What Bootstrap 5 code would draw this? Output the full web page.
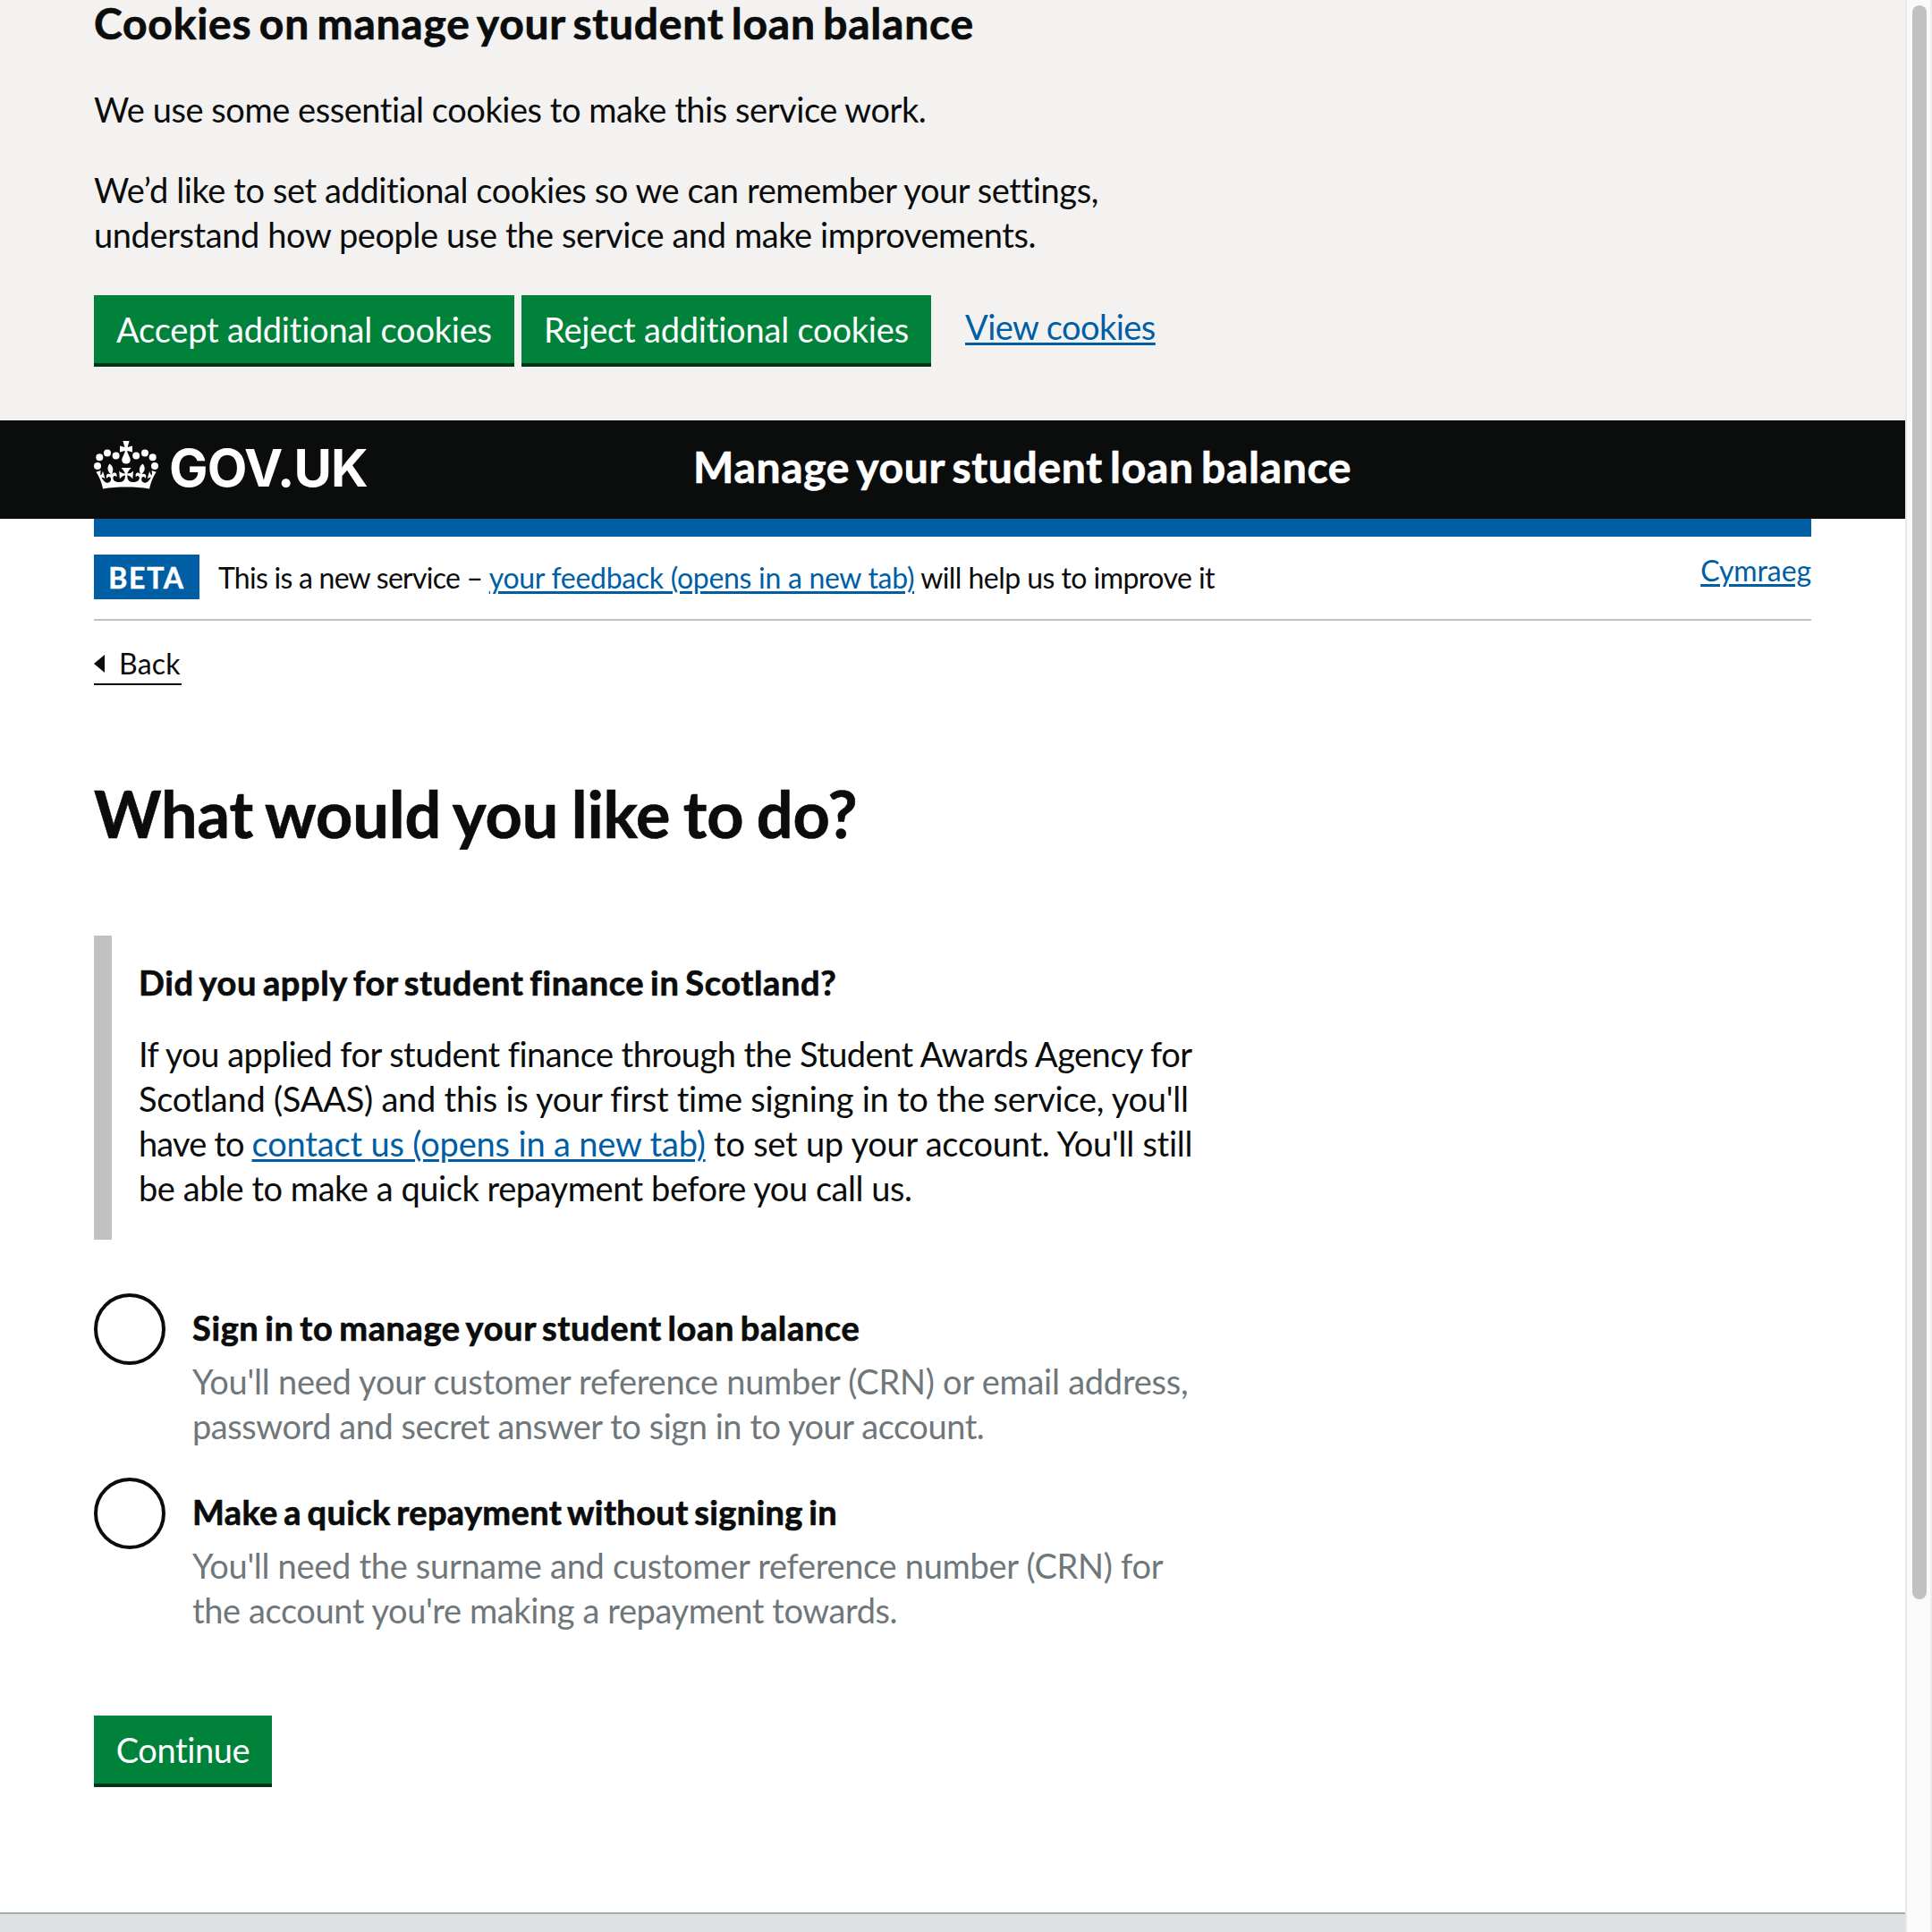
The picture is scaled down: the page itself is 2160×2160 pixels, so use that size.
<!DOCTYPE html>
<html lang="en">
<head>
<meta charset="utf-8">
<title>What would you like to do? - Manage your student loan balance</title>
<link href="https://cdn.jsdelivr.net/npm/bootstrap@5.3.0/dist/css/bootstrap.min.css" rel="stylesheet">
<style>
:root{--ink:#0b0c0c;--brand:#005ea5;--green:#00823b}
html,body{height:100%}
body{font-family:Lato,"Noto Sans",sans-serif;font-size:38px;line-height:50px;color:var(--ink);background:#fff;font-variant-ligatures:none;overflow:hidden}
.page{width:2130px;height:2160px;overflow:hidden}
.wrap{width:1920px;margin-left:105px}
.ln{display:block;white-space:nowrap}
.brand-link{color:var(--brand);text-decoration:underline;text-decoration-thickness:3px;text-underline-offset:3px}
.cookie-banner{height:470px;background:#f3f2f1}
.cookie-title{font-size:48px;line-height:50px;font-weight:700;letter-spacing:.77px;word-spacing:-4px;margin:0 0 46px;padding-top:1px}
.cookie-text{padding-top:40px;margin-bottom:43px}
.cookie-title,.svc-name,.page-title,.b{-webkit-text-stroke:.7px currentColor}
.gov-btn{background:var(--green);color:#fff;border:0;border-bottom:4px solid #003618;border-radius:0;height:80px;padding:13px 0;font-size:38px;line-height:50px;text-align:center;letter-spacing:-.2px}
.w-accept{width:470px}.w-reject{width:458px}.w-continue{width:199px;letter-spacing:-.4px;margin-top:93px}
.view-link{margin:10px 0 0 38px;letter-spacing:-.55px}
.masthead{height:110px;background:var(--ink);color:#fff}
.crown{width:73px;height:54px;fill:currentColor;margin-top:-10px}
.wordmark{font:700 58px/60px Inter,sans-serif;letter-spacing:-.9px;margin-left:11px;padding-bottom:4px;width:581px}
.svc-name{font-size:48px;line-height:60px;font-weight:700;letter-spacing:.68px;word-spacing:-4px;padding-bottom:7px;margin-left:5px}
.bluebar{height:20px;background:var(--brand)}
.phase{height:94px;padding-top:20px;border-bottom:2px solid #bfc1c3;font-size:32px;line-height:52px}
.phase-tag{width:118px;height:50px;background:var(--brand);color:#fff;font-weight:700;letter-spacing:1.7px;text-align:center;margin-right:21px;-webkit-text-stroke:.5px currentColor}
.welsh{margin-top:-8px;letter-spacing:-.1px}
.back{color:var(--ink);font-size:32px;line-height:40px;margin-top:26px;padding-bottom:1px;border-bottom:2px solid var(--ink);height:46px;width:98px;letter-spacing:.2px}
.back svg{width:12px;height:20px;margin:1px 16px 0 0;flex:none}
.page-title{font-size:72px;line-height:80px;font-weight:700;letter-spacing:-.12px;word-spacing:-3px;margin:103px 0 97px}
.inset{height:340px;border-left:20px solid #bfc1c3;padding:27px 0 0 30px}
.inset-title{font-size:38px;line-height:50px;margin-bottom:30px}
.tasks{padding-top:60px}
.ring{width:80px;height:80px;border:4px solid var(--ink);border-radius:50%;background:#fff;margin-right:30px;flex:none;appearance:none}
.choice{margin-bottom:33px}
.choice label{padding-top:13px}
.hint{color:#6f777b;padding-top:10px}
.b{font-weight:700;word-spacing:-3px}
.b.s0{letter-spacing:.61px}.b.s1{letter-spacing:.36px}
.s2{letter-spacing:-.25px}.s3{letter-spacing:-.3px}.s4{letter-spacing:-.4px}.s5{letter-spacing:-.45px}.s6{letter-spacing:-.55px}.s7{letter-spacing:-.75px}
.have{letter-spacing:-.85px}
.contact{letter-spacing:-.17px}
.foot{margin-top:140px;height:22px;background:#dee0e2;border-top:2px solid #a1acb2}
.track{width:30px;height:2160px;background:#fafafa;border-left:2px solid #e8e8e8;border-right:2px solid #ededed;padding:6px 0 0 6px}
.thumb{width:16px;height:1782px;border-radius:8px;background:#c1c1c1}
</style>
<script src="https://cdn.jsdelivr.net/npm/bootstrap@5.3.0/dist/js/bootstrap.bundle.min.js"></script>
</head>
<body class="d-flex">
<div class="page">
  <section class="cookie-banner">
    <div class="wrap">
      <h2 class="cookie-title ln">Cookies on manage your student loan balance</h2>
      <p class="ln s5 mb-0">We use some essential cookies to make this service work.</p>
      <p class="cookie-text"><span class="ln s4">We’d like to set additional cookies so we can remember your settings,</span><span class="ln s4">understand how people use the service and make improvements.</span></p>
      <div class="d-flex align-items-start">
        <button class="btn gov-btn w-accept me-2">Accept additional cookies</button>
        <button class="btn gov-btn w-reject">Reject additional cookies</button>
        <a href="#" class="brand-link view-link">View cookies</a>
      </div>
    </div>
  </section>
  <header class="masthead">
    <div class="wrap h-100 d-flex align-items-center">
      <svg class="crown" viewBox="0 0 73 54" aria-hidden="true">
        <circle cx="4" cy="28" r="4"/><circle cx="6.3" cy="18.3" r="4"/><circle cx="15" cy="13.5" r="4"/><circle cx="24.6" cy="16.5" r="4"/>
        <circle cx="47.2" cy="16.5" r="4"/><circle cx="57" cy="13.5" r="4"/><circle cx="65.7" cy="18.3" r="4"/><circle cx="68" cy="28" r="4"/>
        <path d="M32.4 0h7.2l-2 6.9 5.4-1.5v7l-5.400-1.500-.4 1.200 3.100 6.800c1.500 3.800-.8 6.600-4.300 6.600s-5.800-2.800-4.300-6.600l3.100-6.800-.4-1.200-5.400 1.500v-7l5.400 1.500z"/>
        <path transform="translate(2.400 -10.200) scale(1.060)" d="M37,37.900s-3.400,3.800-4.100,6.100c2.200,0,4.200-.5,6.400-2.800l-.7,8.500c-2-2.800-4.400-4.100-5.700-3.800.1,3.100.5,6.700,5.800,7.200,3.700.3,6.700-1.500,7-3.800.4-2.600-2-4.300-3.700-1.600-1.400-4.500,2.400-6.100,4.900-3.200-1.900-4.500-1.800-7.700,2.400-10.900,3,4,2.600,7.300-1.200,11.100,2.400-1.300,6.200,0,4,4.600-1.200-2.800-3.700-2.200-4.200.2-.3,1.700.7,3.700,3,4.200,1.900.3,4.700-.9,7-5.900-1.300,0-2.400.7-3.900,1.700l2.400-8c.6,2.300,1.400,3.700,2.200,4.500.6-1.600.5-2.800,0-5.300l5,1.800c-2.600,3.600-5.200,8.700-7.300,17.500-7.400-1.100-15.700-1.700-24.500-1.700h0c-8.800,0-17.100.6-24.500,1.700-2.100-8.900-4.700-13.900-7.300-17.500l5-1.800c-.5,2.500-.6,3.700,0,5.300.8-.8,1.600-2.300,2.200-4.500l2.400,8c-1.500-1-2.600-1.700-3.900-1.700,2.300,5,5.200,6.200,7,5.900,2.300-.4,3.300-2.400,3-4.200-.5-2.400-3-3.100-4.200-.2-2.200-4.600,1.600-6,4-4.600-3.700-3.700-4.200-7.100-1.200-11.100,4.200,3.200,4.300,6.400,2.400,10.900,2.500-2.800,6.300-1.300,4.900,3.200-1.800-2.700-4.100-1-3.700,1.600.3,2.300,3.300,4.100,7,3.800,5.400-.5,5.700-4.200,5.800-7.200-1.300-.2-3.700,1-5.700,3.800l-.7-8.500c2.200,2.300,4.200,2.700,6.400,2.800-.7-2.300-4.100-6.100-4.100-6.100h10.600z"/>
      </svg>
      <span class="wordmark">GOV.UK</span>
      <span class="svc-name text-nowrap">Manage your student loan balance</span>
    </div>
  </header>
  <main class="wrap">
    <div class="bluebar"></div>
    <div class="phase d-flex align-items-start">
      <strong class="phase-tag">BETA</strong>
      <span class="text-nowrap"><span class="s7">This is a new service – </span><a href="#" class="brand-link s3">your feedback (opens in a new tab)</a><span class="s6"> will help us to improve it</span></span>
      <a href="#" class="brand-link welsh ms-auto">Cymraeg</a>
    </div>
    <a href="#" class="back d-flex align-items-center text-decoration-none"><svg viewBox="0 0 12 20"><path d="M12 0v20L0 10z" fill="currentColor"/></svg>Back</a>
    <h1 class="page-title">What would you like to do?</h1>
    <div class="inset">
      <h2 class="inset-title ln b s0">Did you apply for student finance in Scotland?</h2>
      <p class="m-0"><span class="ln s6">If you applied for student finance through the Student Awards Agency for</span><span class="ln s2">Scotland (SAAS) and this is your first time signing in to the service, you'll</span><span class="ln s2"><span class="have">have to </span><a href="#" class="brand-link contact">contact us (opens in a new tab)</a> to set up your account. You'll still</span><span class="ln s5">be able to make a quick repayment before you call us.</span></p>
    </div>
    <form class="tasks">
      <div class="choice d-flex">
        <input type="radio" name="task" id="signin" class="ring">
        <label for="signin"><span class="ln b s0">Sign in to manage your student loan balance</span><span class="d-block hint"><span class="ln s2">You'll need your customer reference number (CRN) or email address,</span><span class="ln s5">password and secret answer to sign in to your account.</span></span></label>
      </div>
      <div class="choice d-flex mb-0">
        <input type="radio" name="task" id="quick" class="ring">
        <label for="quick"><span class="ln b s1">Make a quick repayment without signing in</span><span class="d-block hint"><span class="ln s3">You'll need the surname and customer reference number (CRN) for</span><span class="ln s4">the account you're making a repayment towards.</span></span></label>
      </div>
      <button type="button" class="btn gov-btn w-continue d-block">Continue</button>
    </form>
  </main>
  <footer class="foot"></footer>
</div>
<div class="track"><div class="thumb"></div></div>
</body>
</html>
